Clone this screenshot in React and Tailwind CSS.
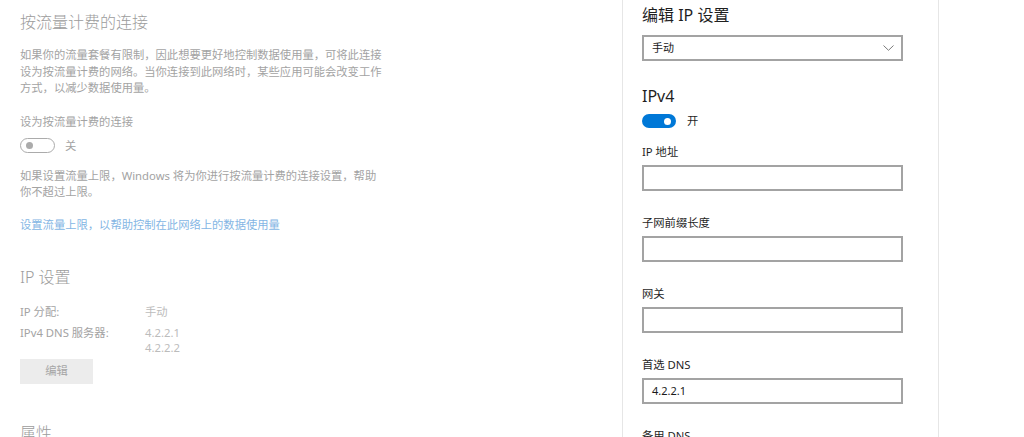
import React from "react";

const FONT = { fontFamily: '"Noto Sans", "Noto Sans CJK SC", sans-serif' };

function Field({ label, value }) {
  return (
    <div className="flex flex-col shrink-0">
      <div className="mt-[24px] h-[16px] leading-[16px] text-[11.3px] text-[#1f1f1f] shrink-0">{label}</div>
      <div className="mt-[5px] h-[26px] w-[261px] shrink-0 border-2 border-[#a3a3a3] bg-white flex items-center pl-[8px] text-[11px] text-[#1a1a1a]">
        {value}
      </div>
    </div>
  );
}

export default function App() {
  return (
    <div className="w-[1024px] h-[437px] overflow-hidden bg-white flex items-start" style={FONT}>
      {/* Left faded page */}
      <div className="w-[622px] shrink-0 pl-[20px] flex flex-col text-[#a3a3a3] *:shrink-0">
        <div className="mt-[12px] h-[20px] leading-[20px] text-[16px] font-light text-[#9c9c9c]">按流量计费的连接</div>
        <div className="mt-[15px] w-[366px] leading-[16.5px] text-[11.3px]">
          如果你的流量套餐有限制，因此想要更好地控制数据使用量，可将此连接设为按流量计费的网络。当你连接到此网络时，某些应用可能会改变工作方式，以减少数据使用量。
        </div>
        <div className="mt-[17px] h-[16px] leading-[16px] text-[11.3px]">设为按流量计费的连接</div>
        <div className="mt-[8.5px] flex items-center h-[15px]">
          <div className="w-[35px] h-[15px] rounded-full border-[1.5px] border-[#ababab] flex items-center pl-[5px]">
            <div className="w-[7px] h-[7px] rounded-full bg-[#ababab]" />
          </div>
          <span className="ml-[10px] text-[11.3px] leading-[15px]">关</span>
        </div>
        <div className="mt-[14.5px] w-[366px] leading-[16px] text-[11.3px]">
          如果设置流量上限，Windows 将为你进行按流量计费的连接设置，帮助你不超过上限。
        </div>
        <div className="mt-[17.5px] h-[16px] leading-[16px] text-[11.3px] text-[#84b6e4]">设置流量上限，以帮助控制在此网络上的数据使用量</div>
        <div className="mt-[34px] h-[20px] leading-[20px] text-[16px] font-light text-[#9c9c9c]">IP 设置</div>
        <div className="mt-[17px] flex h-[16px] leading-[16px] text-[11.3px]">
          <div className="w-[125px]">IP 分配:</div>
          <div className="text-[#bcbcbc]">手动</div>
        </div>
        <div className="mt-[4.5px] flex text-[11.3px]">
          <div className="w-[125px] leading-[15px]">IPv4 DNS 服务器:</div>
          <div className="flex flex-col leading-[15px] text-[#bcbcbc]">
            <div>4.2.2.1</div>
            <div>4.2.2.2</div>
          </div>
        </div>
        <div className="mt-[4.5px] w-[73px] h-[25px] bg-[#ececec] flex items-center justify-center text-[11.3px] text-[#a6a6a6]">编辑</div>
        <div className="mt-[39px] h-[20px] leading-[20px] text-[16px] font-light text-[#9c9c9c]">属性</div>
      </div>

      {/* Dialog */}
      <div className="w-[317px] shrink-0 min-h-[437px] border-x border-[#e6e6e6] pl-[19px] flex flex-col *:shrink-0">
        <div className="mt-[5px] h-[20px] leading-[20px] text-[16px] text-[#1f1f1f]">编辑 IP 设置</div>
        <div className="mt-[10px] h-[26px] w-[261px] border-2 border-[#a3a3a3] flex items-center justify-between pl-[8px] pr-[7px] text-[11px] text-[#1a1a1a]">
          <span>手动</span>
          <svg width="11" height="6" viewBox="0 0 11 6" fill="none">
            <path d="M0.5 0.5 L5.5 5.3 L10.5 0.5" stroke="#7a7a7a" strokeWidth="1" />
          </svg>
        </div>
        <div className="mt-[25px] h-[20px] leading-[20px] text-[16px] text-[#1f1f1f]">IPv4</div>
        <div className="mt-[8px] flex items-center h-[14px]">
          <div className="w-[34px] h-[14px] rounded-full bg-[#0078d7] flex items-center justify-end pr-[5px]">
            <div className="w-[7px] h-[7px] rounded-full bg-white" />
          </div>
          <span className="ml-[11px] text-[11.3px] leading-[14px] text-[#1f1f1f]">开</span>
        </div>
        <div className="-mt-[8px] flex flex-col">
          <Field label="IP 地址" value="" />
          <Field label="子网前缀长度" value="" />
          <Field label="网关" value="" />
          <Field label="首选 DNS" value="4.2.2.1" />
          <div className="mt-[24px] h-[16px] leading-[16px] text-[11.3px] text-[#1f1f1f] shrink-0">备用 DNS</div>
        </div>
      </div>
      <div className="flex-1 bg-white" />
    </div>
  );
}
